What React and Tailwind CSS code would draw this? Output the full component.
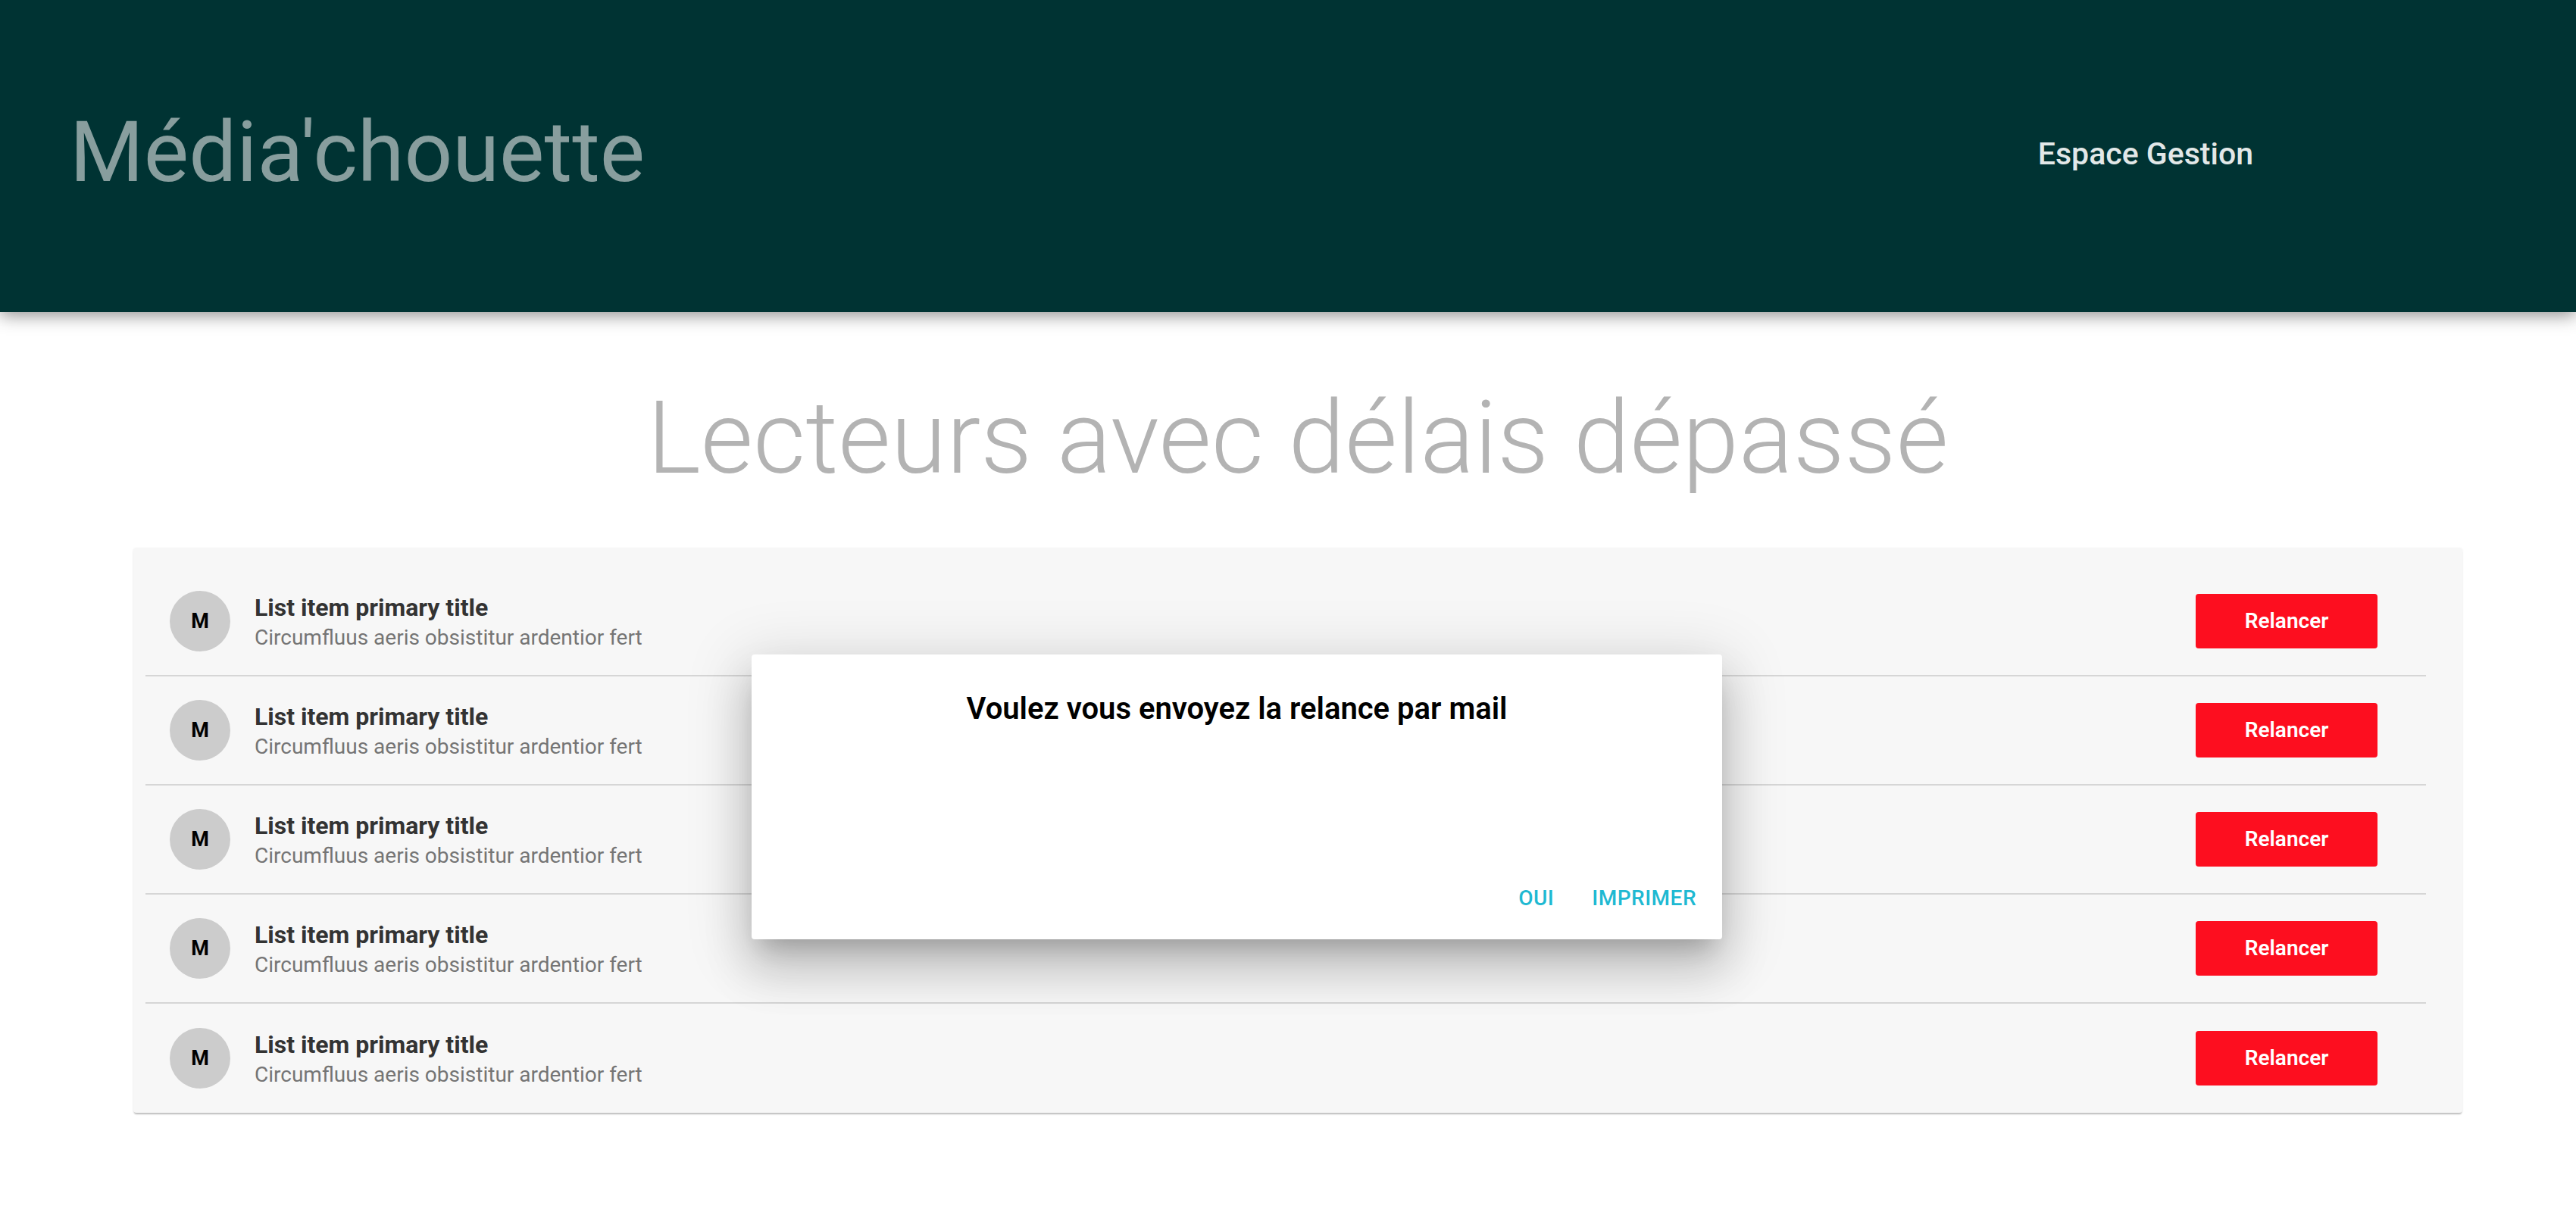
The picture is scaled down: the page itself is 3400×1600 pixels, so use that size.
const readers = [
  { id: 1, initial: "M", title: "List item primary title", subtitle: "Circumfluus aeris obsistitur ardentior fert" },
  { id: 2, initial: "M", title: "List item primary title", subtitle: "Circumfluus aeris obsistitur ardentior fert" },
  { id: 3, initial: "M", title: "List item primary title", subtitle: "Circumfluus aeris obsistitur ardentior fert" },
  { id: 4, initial: "M", title: "List item primary title", subtitle: "Circumfluus aeris obsistitur ardentior fert" },
  { id: 5, initial: "M", title: "List item primary title", subtitle: "Circumfluus aeris obsistitur ardentior fert" },
];

const ReaderRow = ({ reader, last }) => {
  return (
    <div
      className={`ml-[16px] mr-[48px] h-[144px] flex items-center ${
        last ? "h-[142px]" : "border-b-2 border-[#d6d6d6]"
      }`}
    >
      {/* Avatar */}
      <div className="ml-[32px] w-[80px] h-[80px] rounded-full bg-[#cccccc] flex items-center justify-center shrink-0">
        <span className="text-[27px] font-bold text-black leading-none">{reader.initial}</span>
      </div>

      {/* Texts */}
      <div className="ml-[32px] mt-[4px] flex flex-col">
        <span className="text-[32px] leading-[40px] font-bold text-[#333333]">{reader.title}</span>
        <span className="text-[28px] leading-[40px] text-[#757575]">{reader.subtitle}</span>
      </div>

      {/* Action */}
      <button className="ml-auto mr-[64px] w-[240px] h-[72px] rounded-[4px] bg-[#fd0e1f] text-white text-[28px] font-semibold">
        Relancer
      </button>
    </div>
  );
};

const RelanceDialog = () => {
  return (
    <div className="absolute left-[992px] top-[864px] w-[1281px] h-[376px] bg-white rounded-[4px] flex flex-col shadow-[0_22px_30px_-14px_rgba(0,0,0,0.2),0_40px_60px_6px_rgba(0,0,0,0.14),0_14px_80px_14px_rgba(0,0,0,0.12)]">
      <h2 className="pt-[48px] text-center text-[40px] leading-[48px] font-semibold text-black">
        Voulez vous envoyez la relance par mail
      </h2>

      <div className="mt-auto pb-[36px] pr-[34px] flex justify-end gap-[50px]">
        <button className="text-[28px] leading-[36px] font-medium tracking-[0.5px] text-[#1fb9d2]">OUI</button>
        <button className="text-[28px] leading-[36px] font-medium tracking-[0.5px] text-[#1fb9d2]">IMPRIMER</button>
      </div>
    </div>
  );
};

export default function App() {
  return (
    <div className="relative min-h-[1600px] bg-white font-['Roboto',sans-serif]">
      {/* Header */}
      <header className="relative z-10 h-[412px] bg-[#003333] flex items-center justify-between shadow-[0_4px_22px_rgba(0,0,0,0.45)]">
        <h1 className="ml-[92px] mb-[10px] text-[112px] font-normal text-[#889e9e] leading-normal">
          Média'chouette
        </h1>
        <span className="mr-[426px] mb-[4px] text-[41px] font-medium text-[#e2e8e8]">Espace Gestion</span>
      </header>

      <main className="ml-[176px] w-[3074px]">
        <h2 className="mt-[100px] text-center text-[134px] leading-none font-light text-[#b3b3b3]">
          Lecteurs avec délais dépassé
        </h2>

        {/* List card */}
        <div className="mt-[77px] pt-[26px] bg-[#f7f7f7] rounded-[4px] shadow-[0_3px_2px_-1px_rgba(0,0,0,0.22),0_1px_3px_0_rgba(0,0,0,0.08)]">
          {readers.map((reader, index) => (
            <ReaderRow key={reader.id} reader={reader} last={index === readers.length - 1} />
          ))}
        </div>
      </main>

      <RelanceDialog />
    </div>
  );
}
